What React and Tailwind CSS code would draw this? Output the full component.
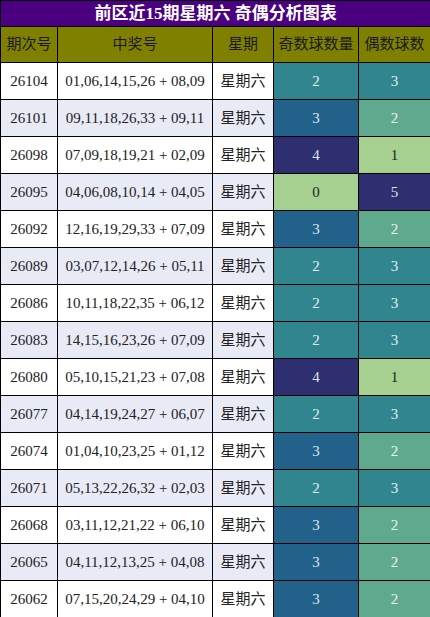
import React from 'react';

const rows = [
  ['26104', '01,06,14,15,26 + 08,09', 2, 3],
  ['26101', '09,11,18,26,33 + 09,11', 3, 2],
  ['26098', '07,09,18,19,21 + 02,09', 4, 1],
  ['26095', '04,06,08,10,14 + 04,05', 0, 5],
  ['26092', '12,16,19,29,33 + 07,09', 3, 2],
  ['26089', '03,07,12,14,26 + 05,11', 2, 3],
  ['26086', '10,11,18,22,35 + 06,12', 2, 3],
  ['26083', '14,15,16,23,26 + 07,09', 2, 3],
  ['26080', '05,10,15,21,23 + 07,08', 4, 1],
  ['26077', '04,14,19,24,27 + 06,07', 2, 3],
  ['26074', '01,04,10,23,25 + 01,12', 3, 2],
  ['26071', '05,13,22,26,32 + 02,03', 2, 3],
  ['26068', '03,11,12,21,22 + 06,10', 3, 2],
  ['26065', '04,11,12,13,25 + 04,08', 3, 2],
  ['26062', '07,15,20,24,29 + 04,10', 3, 2],
];

// colour scale keyed by count (0..5)
const scale = {
  0: 'bg-[#a6d08f] text-[#222]',
  1: 'bg-[#a6d08f] text-[#222]',
  2: 'bg-[#5faa8e] text-[#eef4f0]',
  3: 'bg-[#21618a] text-[#dde6ee]',
  4: 'bg-[#2d2f70] text-[#dfe0ee]',
  5: 'bg-[#2d2f70] text-[#dfe0ee]',
};
const oddScale = {
  0: 'bg-[#a6d08f] text-[#222]',
  1: 'bg-[#a6d08f] text-[#222]',
  2: 'bg-[#31858f] text-[#e2eef0]',
  3: 'bg-[#21618a] text-[#dde6ee]',
  4: 'bg-[#2d2f70] text-[#dfe0ee]',
  5: 'bg-[#2d2f70] text-[#dfe0ee]',
};
const evenScale = {
  0: 'bg-[#a6d08f] text-[#222]',
  1: 'bg-[#a6d08f] text-[#222]',
  2: 'bg-[#5faa8e] text-[#eef4f0]',
  3: 'bg-[#31858f] text-[#e2eef0]',
  4: 'bg-[#21618a] text-[#dde6ee]',
  5: 'bg-[#2d2f70] text-[#dfe0ee]',
};

const cell = 'border border-black text-center p-0';

export default function App() {
  return (
    <div
      className="w-[430px] bg-white"
      style={{ fontFamily: '"Liberation Serif", "Noto Sans CJK SC", serif' }}
    >
      <table className="w-[430px] table-fixed border-collapse">
        <colgroup>
          <col className="w-[57px]" />
          <col className="w-[155px]" />
          <col className="w-[61px]" />
          <col className="w-[85px]" />
          <col className="w-[72px]" />
        </colgroup>
        <thead>
          <tr className="h-[26px]">
            <th
              colSpan={5}
              className="border border-black bg-[#4b0082] text-white text-[17px] font-bold leading-none p-0"
            >
              前区近15期星期六 奇偶分析图表
            </th>
          </tr>
          <tr className="h-[36px] bg-[#808000] text-[#1a1a1a] text-[15px]">
            <th className={cell + ' font-normal'}>期次号</th>
            <th className={cell + ' font-normal'}>中奖号</th>
            <th className={cell + ' font-normal'}>星期</th>
            <th className={cell + ' font-normal'}>奇数球数量</th>
            <th className={cell + ' font-normal'}>偶数球数</th>
          </tr>
        </thead>
        <tbody className="text-[15px] text-[#222]">
          {rows.map(([issue, nums, odd, even], i) => (
            <tr key={issue} className={'h-[37px] ' + (i % 2 ? 'bg-[#e8eaf6]' : 'bg-white')}>
              <td className={cell}>{issue}</td>
              <td className={cell}>{nums}</td>
              <td className={cell}>星期六</td>
              <td className={cell + ' ' + oddScale[odd]}>{odd}</td>
              <td className={cell + ' ' + evenScale[even]}>{even}</td>
            </tr>
          ))}
        </tbody>
      </table>
    </div>
  );
}
